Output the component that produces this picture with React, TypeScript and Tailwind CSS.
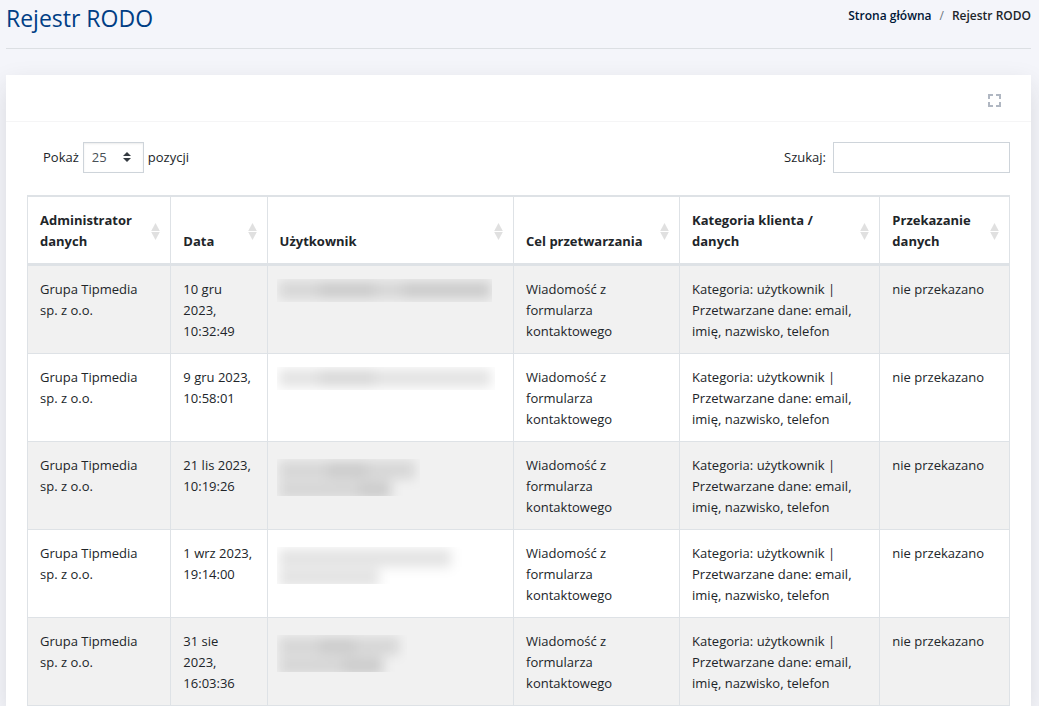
import React, { useState } from "react";

type Entry = {
  date: string;
  // masked lines: width in px and darkness of every blurred chunk
  user: { box: string; lines: string[][] };
};

const columns = [
  { label: "Administrator danych", width: "w-[14.6%]" },
  { label: "Data", width: "w-[9.8%]" },
  { label: "Użytkownik", width: "w-[25.1%]" },
  { label: "Cel przetwarzania", width: "w-[16.9%]" },
  { label: "Kategoria klienta / danych", width: "w-[20.4%]" },
  { label: "Przekazanie danych", width: "w-[13.2%]" },
];

const light = "bg-black/11";
const dark = "bg-black/15";

const entries: Entry[] = [
  {
    date: "10 gru 2023, 10:32:49",
    user: {
      box: "w-[215px] h-[23px]",
      lines: [[`w-10 ${light}`, `w-14 ${dark}`, `w-7 ${light}`, `w-22 ${dark}`]],
    },
  },
  {
    date: "9 gru 2023, 10:58:01",
    user: {
      box: "w-[218px] h-[23px]",
      lines: [[`w-10 ${light}`, `w-14 ${dark}`, `w-7 ${light}`, `w-22 ${light}`]],
    },
  },
  {
    date: "21 lis 2023, 10:19:26",
    user: {
      box: "w-[143px] h-[37px] mt-1",
      lines: [
        [`w-12 ${light}`, `w-10 ${dark}`, `w-12 ${light}`],
        [`w-20 ${light}`, `w-8 ${dark}`],
      ],
    },
  },
  {
    date: "1 wrz 2023, 19:14:00",
    user: {
      box: "w-[185px] h-[37px] mt-1",
      lines: [
        [`w-20 ${light}`, `w-12 ${light}`, `w-11 ${light}`],
        [`w-16 ${light}`, `w-9 ${light}`],
      ],
    },
  },
  {
    date: "31 sie 2023, 16:03:36",
    user: {
      box: "w-[130px] h-[37px] mt-1",
      lines: [
        [`w-10 ${light}`, `w-9 ${dark}`, `w-11 ${light}`],
        [`w-16 ${light}`, `w-10 ${dark}`],
      ],
    },
  },
];

const SortIcon = () => (
  <svg className="w-[9px] h-[17px] shrink-0 self-center" viewBox="0 0 9 17" fill="#e0e0e0" aria-hidden="true">
    <path d="M4.5 0L8.8 8H.2z" />
    <path d="M4.5 17L8.8 9H.2z" />
  </svg>
);

const MaskedUser = ({ user }: { user: Entry["user"] }) => (
  <div className={`-ml-[3px] overflow-hidden ${user.box}`} aria-label="Dane ukryte">
    <div className="flex flex-col gap-[2px] pl-[2px] pt-[2px] blur-[6px]">
      {user.lines.map((line, i) => (
        <div key={i} className="flex h-[18px]">
          {line.map((chunk, j) => (
            <span key={j} className={chunk} />
          ))}
        </div>
      ))}
    </div>
  </div>
);

const App = () => {
  const [size, setSize] = useState("25");
  const [search, setSearch] = useState("");

  return (
    <div className="min-h-screen bg-[#f4f5fa] pl-[6px] pr-2 font-['Open_Sans','Noto_Sans',sans-serif] text-[13px] leading-[21px] text-[#212529]">
      <header className="flex items-start justify-between border-b border-[#dcdfe3] pb-3">
        <h1 className="text-[23px] leading-9 font-medium text-[#003e85]">Rejestr RODO</h1>
        <nav aria-label="breadcrumb" className="pt-[5px]">
          <ol className="flex text-[12px] font-semibold">
            <li>
              <a href="#home" className="text-[#001737]">Strona główna</a>
            </li>
            <li className="px-2 font-normal text-[#6c757d]">/</li>
            <li aria-current="page">Rejestr RODO</li>
          </ol>
        </nav>
      </header>

      <main className="mt-[26px] bg-white shadow-[0_10px_25px_rgba(34,34,34,0.12)]">
        <div className="flex h-[47px] items-center justify-end border-b border-[#f5f5f6] pt-[5px] pr-[30px]">
          <button type="button" aria-label="Pełny ekran">
            <svg className="h-[13px] w-[13px]" viewBox="0 0 13 13" fill="none" stroke="#b0b7c2" strokeWidth="2">
              <path d="M1 5V1h4M8 1h4v4M12 8v4H8M5 12H1V8" />
            </svg>
          </button>
        </div>

        <div className="px-[21px] pt-5">
          <div className="flex items-center justify-between">
            <label className="flex items-center gap-1 pl-4">
              Pokaż
              <span className="relative">
                <select
                  value={size}
                  onChange={(e) => setSize(e.target.value)}
                  className="h-[31px] w-[61px] appearance-none border border-[#ced4da] bg-white pl-2 text-[13px] text-[#495057] shadow-[inset_0_1px_2px_rgba(0,0,0,0.075)]"
                >
                  <option>10</option>
                  <option>25</option>
                  <option>50</option>
                  <option>100</option>
                </select>
                <svg className="pointer-events-none absolute top-[10px] right-[13px] h-[10px] w-2" viewBox="0 0 4 5" fill="#343a40">
                  <path d="M2 0L0 2h4zm0 5L0 3h4z" />
                </svg>
              </span>
              pozycji
            </label>
            <label className="flex items-center gap-[7px]">
              Szukaj:
              <input
                type="search"
                value={search}
                onChange={(e) => setSearch(e.target.value)}
                className="h-[31px] w-[177px] border border-[#ced4da] bg-white px-2"
              />
            </label>
          </div>

          <table className="mt-[22px] w-full table-fixed border-separate border-spacing-0 border-t border-l border-[#dee2e6]">
            <thead>
              <tr>
                {columns.map((col) => (
                  <th
                    key={col.label}
                    className={`${col.width} border-t border-r border-b-[3px] border-[#dee2e6] pt-[13px] pr-[10px] pb-[11px] pl-3 text-left font-bold`}
                  >
                    <button type="button" className="flex min-h-[42px] w-full items-end justify-between text-left">
                      <span>{col.label}</span>
                      <SortIcon />
                    </button>
                  </th>
                ))}
              </tr>
            </thead>
            <tbody>
              {entries.map((entry) => (
                <tr
                  key={entry.date}
                  className="align-top odd:bg-[#f1f1f1] [&>td]:border-r [&>td]:border-b [&>td]:border-[#dee2e6] [&>td]:pt-[13px] [&>td]:pr-[14px] [&>td]:pb-[11px] [&>td]:pl-3"
                >
                  <td>Grupa Tipmedia sp. z o.o.</td>
                  <td>{entry.date}</td>
                  <td>
                    <MaskedUser user={entry.user} />
                  </td>
                  <td>Wiadomość z formularza kontaktowego</td>
                  <td>Kategoria: użytkownik | Przetwarzane dane: email, imię, nazwisko, telefon</td>
                  <td>nie przekazano</td>
                </tr>
              ))}
            </tbody>
          </table>
        </div>
      </main>
    </div>
  );
};

export default App;
